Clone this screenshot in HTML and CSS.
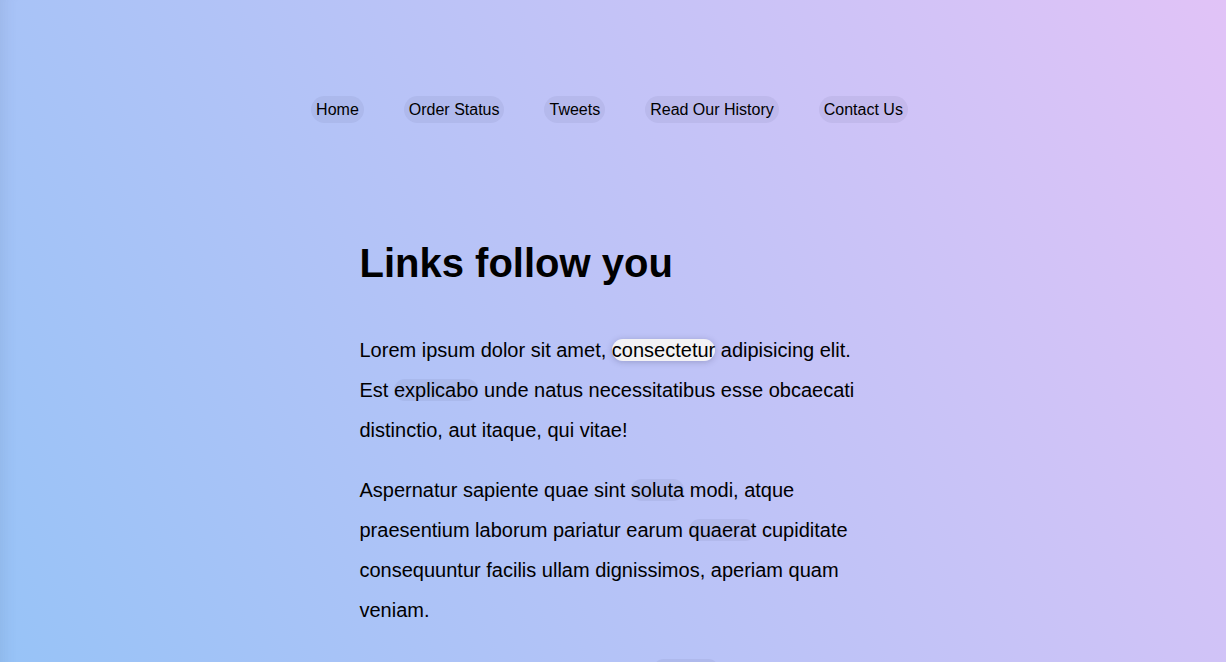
FILE: index.html
```html
<!DOCTYPE html>
<html lang="en">
<head>
<meta charset="utf-8">
<title>Links follow you</title>
<link rel="stylesheet" href="styles.css">
</head>
<body>
<header class="site-header">
  <nav class="nav">
    <ul class="nav-list">
      <li><a class="nav-link" href="#">Home</a></li>
      <li><a class="nav-link" href="#">Order Status</a></li>
      <li><a class="nav-link" href="#">Tweets</a></li>
      <li><a class="nav-link" href="#">Read Our History</a></li>
      <li><a class="nav-link" href="#">Contact Us</a></li>
    </ul>
  </nav>
</header>
<main class="content">
  <h1 class="title">Links follow you</h1>
  <p class="para">Lorem ipsum dolor sit amet, <a class="text-link is-active" href="#">consectetur</a> adipisicing elit. Est <a class="text-link" href="#">explicabo</a> unde natus necessitatibus esse obcaecati distinctio, aut itaque, qui vitae!</p>
  <p class="para">Aspernatur sapiente quae sint <a class="text-link" href="#">soluta</a> modi, atque praesentium laborum pariatur earum <a class="text-link" href="#">quaerat</a> cupiditate consequuntur facilis ullam dignissimos, aperiam quam veniam.</p>
  <p class="para">Natus dolorem nostrum voluptas <a class="text-link" href="#">dolores</a> quaerat nemo harum eius tempore porro, laudantium.</p>
</main>
</body>
</html>
```

FILE: styles.css
```css
html {
  min-height: 100%;
  background-color: #8ec5fc;
  background-image: linear-gradient(62deg, #95c3f7 0%, #e1c3f7 100%);
}

body {
  margin: 0;
  padding: 0 7px 0 0;
  min-height: 100vh;
  box-sizing: border-box;
  font-family: "Liberation Sans", Helvetica, Arial, sans-serif;
  font-size: 20px;
  line-height: 2;
  color: #000;
  box-shadow: inset 16px 0 14px -12px rgba(60, 80, 110, 0.10);
}

a {
  color: #000;
  text-decoration: none;
}

.site-header {
  padding: 94px 0 70px;
}

.nav-list {
  list-style: none;
  margin: 0;
  padding: 0;
  display: flex;
  justify-content: center;
  gap: 40px;
  font-size: 16px;
}

.nav-link {
  padding: 5px;
  border-radius: 14px;
  background: rgba(50, 50, 100, 0.07);
}

.content {
  width: 500px;
  margin: 0 auto;
}

.title {
  font-size: 40px;
  font-weight: bold;
  margin: 0.67em 0;
}

.para {
  margin: 20px 0;
}

.text-link {
  border-radius: 11px;
  background: rgba(50, 50, 100, 0.07);
}

.text-link.is-active {
  background: #f3f2f5;
  box-shadow: 0 1px 6px rgba(40, 40, 80, 0.25);
}
```
